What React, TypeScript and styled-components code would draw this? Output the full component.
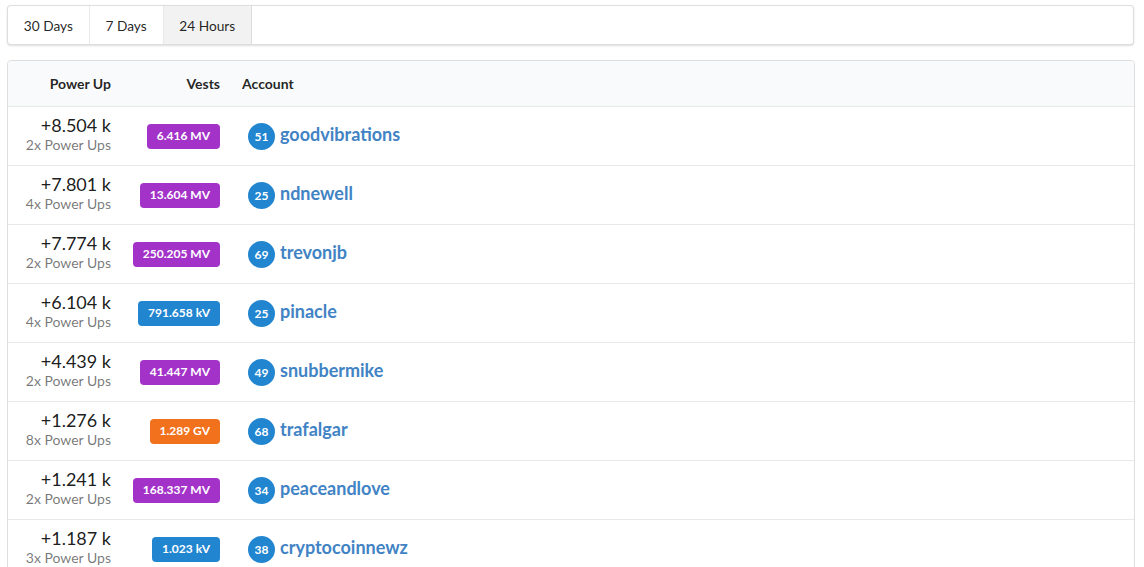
import styled, { createGlobalStyle } from "styled-components";

const GlobalStyle = createGlobalStyle`
  body {
    margin: 0;
    background: #fff;
    font-family: Lato, "Helvetica Neue", Arial, sans-serif;
    color: rgba(0, 0, 0, 0.87);
  }
`;

const Page = styled.div`
  padding: 5px 9px 0 7px;
`;

const Menu = styled.div`
  display: flex;
  margin: 0 1px 15px 0;
  height: 38px;
  border: 1px solid rgba(34, 36, 38, 0.15);
  border-radius: 4px;
  box-shadow: 0 1px 2px 0 rgba(34, 36, 38, 0.15);
  background: #fff;
`;

const MenuItem = styled.div<{ $active?: boolean }>`
  display: flex;
  align-items: center;
  padding: 0 15.8px;
  font-size: 13.7px;
  border-right: 1px solid rgba(34, 36, 38, 0.1);
  background: ${(p) => (p.$active ? "rgba(0, 0, 0, 0.05)" : "transparent")};
  color: rgba(0, 0, 0, 0.87);
  cursor: pointer;
`;

const Table = styled.div`
  border: 1px solid rgba(34, 36, 38, 0.15);
  border-radius: 4px;
  overflow: hidden;
`;

const Row = styled.div<{ $head?: boolean }>`
  display: grid;
  grid-template-columns: 114px 109px 1fr;
  align-items: center;
  background: ${(p) => (p.$head ? "#f9fafb" : "#fff")};
  border-top: ${(p) => (p.$head ? "none" : "1px solid rgba(34, 36, 38, 0.1)")};
`;

const HeadCell = styled.div<{ $right?: boolean }>`
  padding: 0 11px;
  height: 45px;
  display: flex;
  align-items: center;
  justify-content: ${(p) => (p.$right ? "flex-end" : "flex-start")};
  font-size: 14px;
  font-weight: 700;
`;

const PowerCell = styled.div`
  padding: 8px 11px 11px;
  text-align: right;
`;

const Amount = styled.div`
  font-size: 18px;
  line-height: 21px;
  color: rgba(0, 0, 0, 0.9);
`;

const Count = styled.div`
  font-size: 14px;
  line-height: 18px;
  color: rgba(0, 0, 0, 0.55);
`;

const VestsCell = styled.div`
  padding: 0 11px;
  display: flex;
  justify-content: flex-end;
`;

const Label = styled.span<{ $color: string }>`
  display: inline-block;
  background: ${(p) => p.$color};
  color: #fff;
  font-size: 12px;
  line-height: 12px;
  font-weight: 700;
  padding: 6px 10px 7px;
  border-radius: 4px;
  white-space: nowrap;
`;

const AccountCell = styled.div`
  padding: 0 11px 0 17px;
  display: flex;
  align-items: center;
  gap: 5px;
`;

const Rep = styled.span`
  width: 27px;
  height: 27px;
  border-radius: 50%;
  background: #2185d0;
  color: #fff;
  font-size: 12px;
  font-weight: 700;
  display: flex;
  align-items: center;
  justify-content: center;
`;

const Name = styled.a`
  font-size: 18px;
  font-weight: 700;
  color: #4183c4;
  text-decoration: none;
  margin-bottom: 4px;
`;

const colors: Record<string, string> = {
  MV: "#a333c8",
  kV: "#2185d0",
  GV: "#f2711c",
};

const rows = [
  { amount: "+8.504 k", count: 2, vests: "6.416 MV", rep: 51, name: "goodvibrations" },
  { amount: "+7.801 k", count: 4, vests: "13.604 MV", rep: 25, name: "ndnewell" },
  { amount: "+7.774 k", count: 2, vests: "250.205 MV", rep: 69, name: "trevonjb" },
  { amount: "+6.104 k", count: 4, vests: "791.658 kV", rep: 25, name: "pinacle" },
  { amount: "+4.439 k", count: 2, vests: "41.447 MV", rep: 49, name: "snubbermike" },
  { amount: "+1.276 k", count: 8, vests: "1.289 GV", rep: 68, name: "trafalgar" },
  { amount: "+1.241 k", count: 2, vests: "168.337 MV", rep: 34, name: "peaceandlove" },
  { amount: "+1.187 k", count: 3, vests: "1.023 kV", rep: 38, name: "cryptocoinnewz" },
];

export default function App() {
  return (
    <Page>
      <GlobalStyle />
      <Menu>
        <MenuItem>30 Days</MenuItem>
        <MenuItem>7 Days</MenuItem>
        <MenuItem $active>24 Hours</MenuItem>
      </Menu>
      <Table>
        <Row $head>
          <HeadCell $right>Power Up</HeadCell>
          <HeadCell $right>Vests</HeadCell>
          <HeadCell>Account</HeadCell>
        </Row>
        {rows.map((r) => (
          <Row key={r.name}>
            <PowerCell>
              <Amount>{r.amount}</Amount>
              <Count>{r.count}x Power Ups</Count>
            </PowerCell>
            <VestsCell>
              <Label $color={colors[r.vests.split(" ")[1]]}>{r.vests}</Label>
            </VestsCell>
            <AccountCell>
              <Rep>{r.rep}</Rep>
              <Name href="#">{r.name}</Name>
            </AccountCell>
          </Row>
        ))}
      </Table>
    </Page>
  );
}
